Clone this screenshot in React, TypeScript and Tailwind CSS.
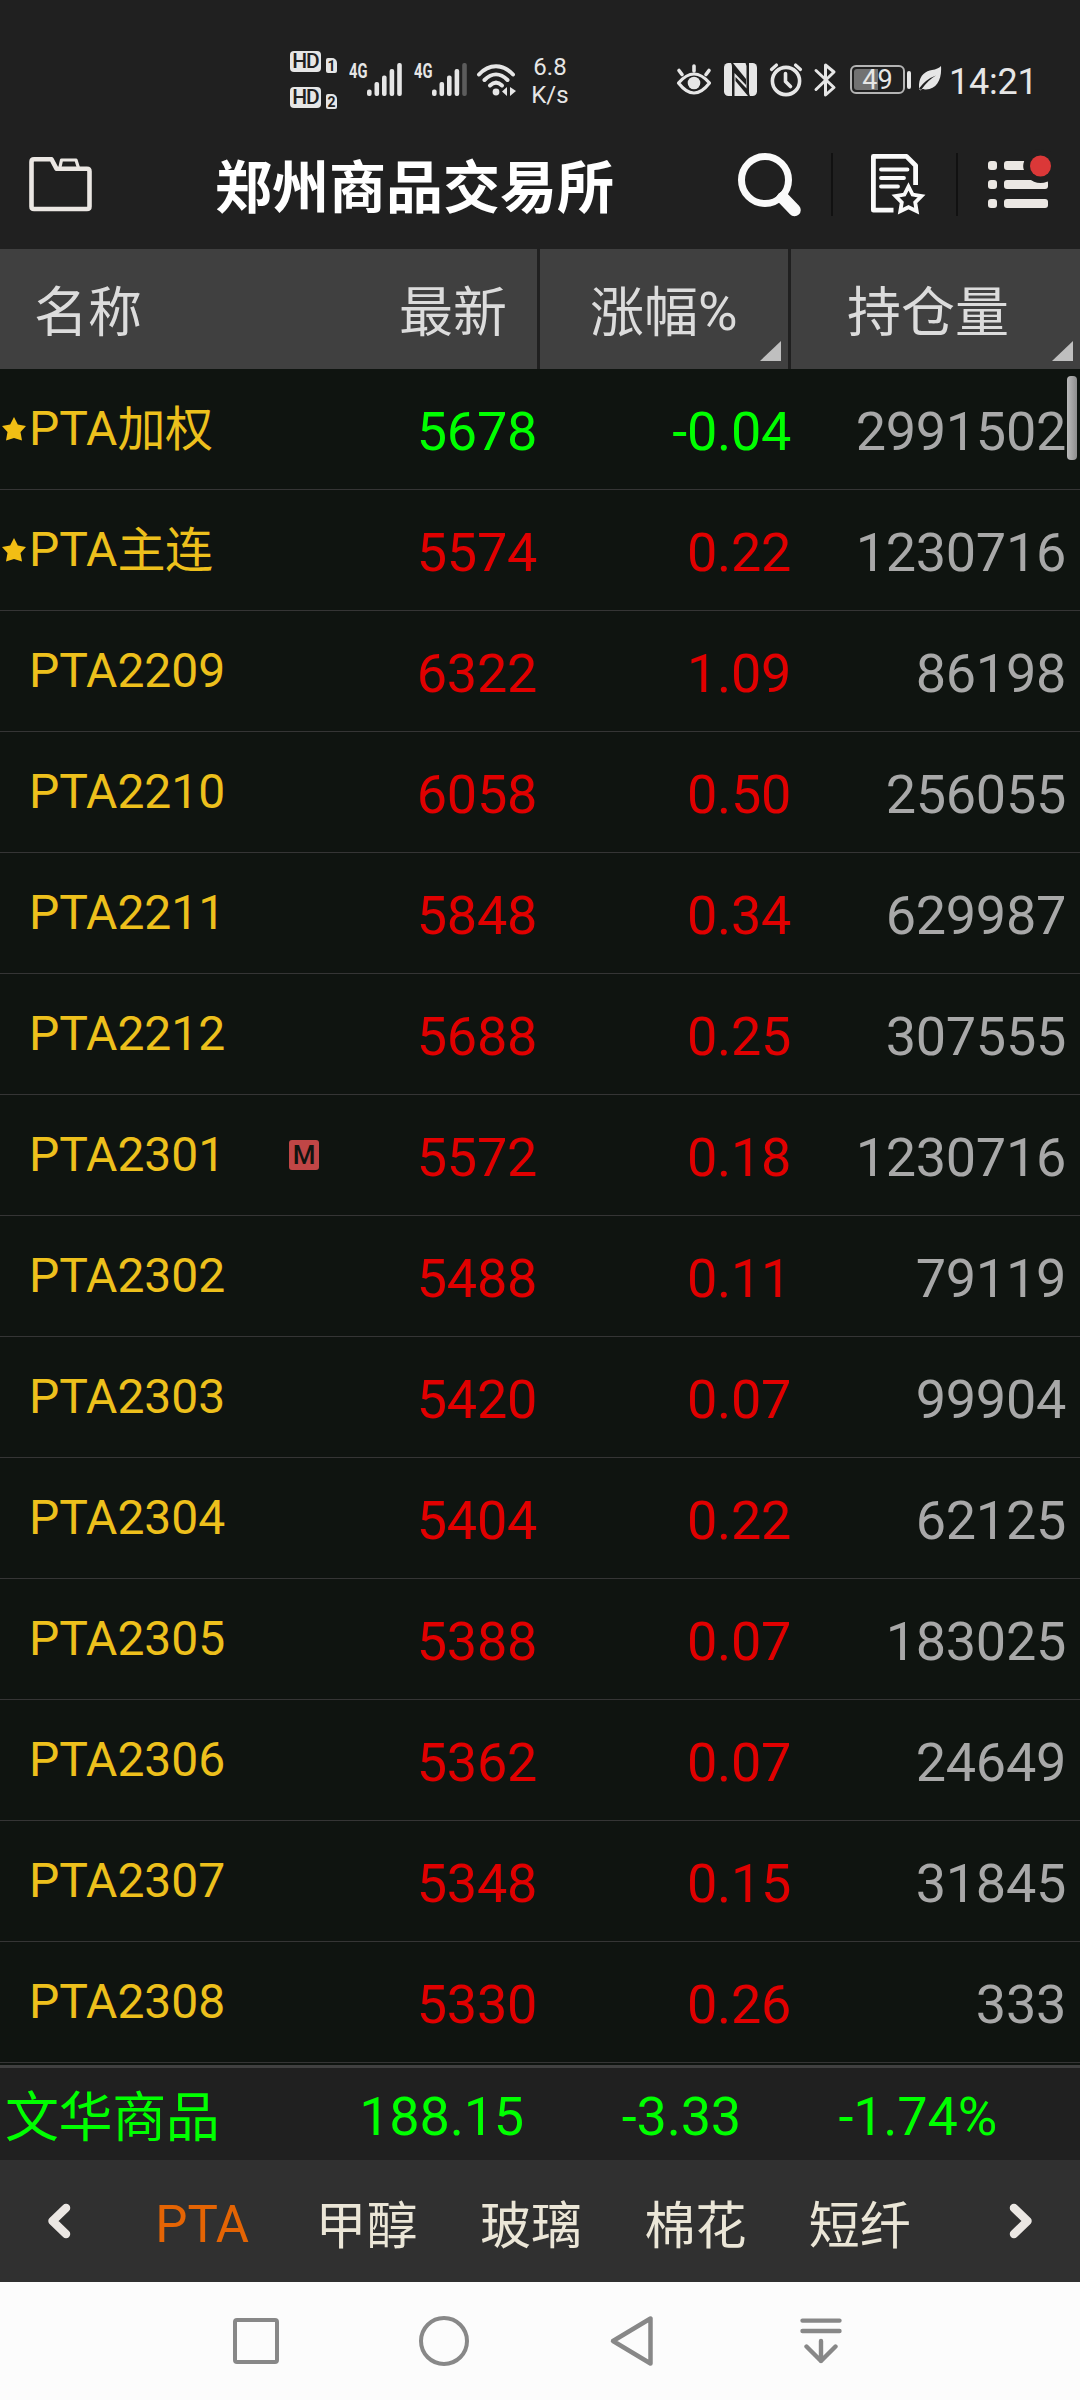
import React from "react";

type Quote = {
  name: string;
  label?: string;
  last: string;
  change: string;
  interest: string;
  starred?: boolean;
  main?: boolean;
};

const quotes: Quote[] = [
  { name: "PTA", label: "加权", last: "5678", change: "-0.04", interest: "2991502", starred: true },
  { name: "PTA", label: "主连", last: "5574", change: "0.22", interest: "1230716", starred: true },
  { name: "PTA2209", last: "6322", change: "1.09", interest: "86198" },
  { name: "PTA2210", last: "6058", change: "0.50", interest: "256055" },
  { name: "PTA2211", last: "5848", change: "0.34", interest: "629987" },
  { name: "PTA2212", last: "5688", change: "0.25", interest: "307555" },
  { name: "PTA2301", last: "5572", change: "0.18", interest: "1230716", main: true },
  { name: "PTA2302", last: "5488", change: "0.11", interest: "79119" },
  { name: "PTA2303", last: "5420", change: "0.07", interest: "99904" },
  { name: "PTA2304", last: "5404", change: "0.22", interest: "62125" },
  { name: "PTA2305", last: "5388", change: "0.07", interest: "183025" },
  { name: "PTA2306", last: "5362", change: "0.07", interest: "24649" },
  { name: "PTA2307", last: "5348", change: "0.15", interest: "31845" },
  { name: "PTA2308", last: "5330", change: "0.26", interest: "333" },
];

const tabs = ["PTA", "甲醇", "玻璃", "棉花", "短纤"];

function HdBadge({ sim }: { sim: string }) {
  return (
    <div className="flex h-[22px] items-start">
      <span className="flex h-[21px] w-[31px] items-center justify-center rounded-[4px] bg-[#e6e6e6] text-[21px] leading-none font-medium tracking-[-1px] text-[#202020]">
        HD
      </span>
      <span className="mt-[7px] ml-[5px] flex h-[15px] w-[11px] items-center justify-center rounded-[2px] rounded-tr-[5px] bg-[#e6e6e6] text-[14px] leading-none font-bold text-[#202020]">
        {sim}
      </span>
    </div>
  );
}

function Signal({ weak }: { weak?: boolean }) {
  return (
    <div className="flex h-[33px] w-[53px] justify-between">
      <span className="w-[18px] text-[21px] leading-[16px] font-bold">
        <span className="inline-block origin-left scale-x-[0.7]">4G</span>
      </span>
      <svg width="35" height="33" viewBox="0 0 35 33" fill="#e6e6e6">
        <rect x="0" y="26.5" width="4.6" height="6.5" rx="2" />
        <rect x="7.5" y="19" width="4.6" height="14" rx="2" />
        <rect x="15" y="12.500" width="4.6" height="20.500" rx="2" />
        <rect x="22.600" y="6" width="4.6" height="27" rx="2" />
        <rect x="30.200" y="0" width="4.6" height="33" rx="2" fill={weak ? "#5c5c5c" : "#e6e6e6"} />
      </svg>
    </div>
  );
}

function StatusBar() {
  return (
    <div className="flex h-[121px] items-start text-[#e6e6e6]">
      <div className="mt-[51px] ml-[290px] flex w-[47px] flex-col gap-[14px]">
        <HdBadge sim="1" />
        <HdBadge sim="2" />
      </div>
      <div className="mt-[63px] ml-[12px] flex gap-[12px]">
        <Signal />
        <Signal weak />
      </div>
      <svg className="mt-[63px] ml-[9px]" width="41" height="34" viewBox="0 0 41 34" fill="none" stroke="#e6e6e6" strokeWidth="4" strokeLinecap="round">
        <path d="M3 11.500C13 .5 27 .5 37 11.500" />
        <path d="M8.500 17C16 9.500 24 9.500 31.500 17" />
        <path d="M14 22.500C18 18.700 22 18.700 26 22.500" />
        <circle cx="20" cy="29" r="3.400" fill="#e6e6e6" stroke="none" />
        <path d="M31 24v9l-5-4.500zM34 24l6 4-6 5z" fill="#e6e6e6" stroke="none" />
      </svg>
      <div className="mt-[53px] ml-[9px] w-[48px] text-center text-[24px] leading-[28px]">
        <div>6.8</div>
        <div>K/s</div>
      </div>
      <svg className="mt-[62px] ml-[102px]" width="36" height="35" viewBox="0 0 36 35" fill="none" stroke="#e6e6e6" strokeWidth="3.600" strokeLinecap="round">
        <path d="M2.500 21Q18 3 33.500 21Q18 41 2.500 21Z" strokeLinejoin="round" strokeWidth="3.200" />
        <circle cx="18" cy="21" r="6.300" fill="#e6e6e6" stroke="none" />
        <path d="M18 4v5M3 8.500l3 4M33 8.500l-3 4" />
      </svg>
      <svg className="mt-[63px] ml-[12px]" width="33" height="33" viewBox="0 0 33 33">
        <rect width="33" height="33" rx="4.500" fill="#e6e6e6" />
        <path d="M8 33V4Q8 1.500 7 0L9 0L22 16V22L10.500 10V33Z" fill="#202020" />
        <path d="M25 0V29Q25 31.500 26 33H24L11.500 18V14L22.500 25.500V3L21.500 0Z" fill="#202020" />
      </svg>
      <svg className="mt-[62px] ml-[12px]" width="34" height="35" viewBox="0 0 34 35" fill="none" stroke="#e6e6e6" strokeWidth="3.600" strokeLinecap="round" strokeLinejoin="round">
        <circle cx="17" cy="19" r="13.600" />
        <path d="M16.500 11.500v8l5 5" />
        <path d="M2.500 7.500l5-4.500M31.500 7.500l-5-4.500" strokeWidth="3.200" />
      </svg>
      <svg className="mt-[62px] ml-[10px]" width="24" height="36" viewBox="0 0 24 36" fill="none" stroke="#e6e6e6" strokeWidth="3" strokeLinejoin="round" strokeLinecap="round">
        <path d="M3 8.500L21 25.500L12.500 33V3L21 10L3 27.500" />
      </svg>
      <div className="mt-[65px] ml-[13px] flex items-center">
        <div className="relative flex h-[29px] w-[55px] items-center justify-center rounded-[6px] border-2 border-[#b4b4b4] text-[27px] leading-none">
          <span className="absolute top-[2px] left-[2px] h-[21px] w-[24px] rounded-l-[3px] bg-[#727272]" />
          <span className="relative top-px">49</span>
        </div>
        <div className="ml-[2px] h-[18px] w-[4px] rounded-[2px] bg-[#e6e6e6]" />
      </div>
      <svg className="mt-[66px] ml-[8px]" width="23" height="25" viewBox="0 0 23 25">
        <path d="M22 0C23 13 18 23 7 23.500C4 23.500 4 22 1.500 24.500L0 23C-1 10 6 5 13 4C17 3.500 20 2 22 0Z" fill="#e6e6e6" />
        <path d="M0 22.500Q7 13 17 9.500Q9 14 2 24Z" fill="#202020" />
      </svg>
      <span className="mt-[61px] ml-[7px] text-[36px] leading-[42px] tracking-[-0.2px]">14:21</span>
    </div>
  );
}

function TitleBar() {
  return (
    <div className="flex h-[128px] items-start">
      <svg className="mt-[36px] ml-[29px]" width="63" height="55" viewBox="0 0 63 55" fill="none" stroke="#ebe7e3" strokeWidth="4.600" strokeLinejoin="round">
        <path d="M2.500 5Q2.500 2.300 5 2.300H22.500L27.500 11.800H58Q60.500 11.800 60.500 14.500V49.500Q60.500 52 58 52H5Q2.500 52 2.500 49.500Z" />
        <path d="M31 10L32.500 3H47L49.500 11" strokeWidth="3.200" />
      </svg>
      <h1 className="mt-[34px] ml-[123px] w-[400px] text-[57px] leading-[68px] font-bold whitespace-nowrap text-white">郑州商品交易所</h1>
      <svg className="mt-[32px] ml-[122px]" width="65" height="65" viewBox="0 0 65 65" fill="none" stroke="#fafafa">
        <circle cx="28" cy="27" r="23.500" strokeWidth="7" />
        <path d="M46 45L57.500 57" strokeWidth="12.500" strokeLinecap="round" />
        <path d="M42 41L50 49" strokeWidth="10" />
      </svg>
      <div className="mt-[32px] ml-[29px] h-[63px] w-[2px] bg-[#111111]" />
      <svg className="mt-[33px] ml-[38px]" width="55" height="62" viewBox="0 0 55 62" fill="none" stroke="#fafafa" strokeWidth="4.800">
        <path d="M22.500 56.200H2.400V2.400H35.500L44.600 11.500V31" strokeLinejoin="round" />
        <path d="M10 15.500H36.500M10 24H33M10 32.500H27" strokeWidth="3.800" strokeLinecap="round" />
        <path d="M37.500 32.500L41.600 40.600L50.500 42L44.200 48.300L45.700 57.200L37.500 53.200L29.300 57.200L30.800 48.300L24.500 42L33.400 40.600Z" strokeWidth="3.800" />
      </svg>
      <div className="mt-[32px] ml-[30px] h-[63px] w-[2px] bg-[#111111]" />
      <svg className="mt-[34px] ml-[30px] overflow-visible" width="65" height="56" viewBox="0 0 65 56" fill="#ebe7e3">
        <rect x="0" y="-3" width="9" height="9" rx="3" transform="translate(0 0)" className="hidden" />
        <rect x="0" y="-2.500" width="9" height="9" rx="3" transform="translate(0 8.500)" />
        <rect x="0" y="25" width="9" height="9" rx="3" transform="translate(0 0)" />
        <rect x="0" y="44" width="9" height="9" rx="3" />
        <path d="M19 6H36.500Q34.500 10 36 15H19Q16 15 16 12V9Q16 6 19 6Z" />
        <rect x="16" y="25" width="44" height="9" rx="3" />
        <rect x="16" y="44" width="44" height="9" rx="3" />
        <circle cx="52.500" cy="11" r="17" fill="#202020" />
        <circle cx="52.500" cy="11" r="10.500" fill="#db3838" />
      </svg>
    </div>
  );
}

function SortMark() {
  return (
    <svg className="absolute right-[7px] bottom-[8px]" width="21" height="20" viewBox="0 0 21 20">
      <path d="M21 0V20H0Z" fill="#bfbfbf" />
    </svg>
  );
}

function ColumnHeader() {
  return (
    <div className="flex h-[120px] gap-[3px] text-[54px] leading-[64px] text-[#dcdcdc]">
      <div className="flex w-[537px] items-center justify-between bg-[#404040] pt-[10px] pr-[30px] pl-[34px]">
        <span>名称</span>
        <span>最新</span>
      </div>
      <div className="relative flex w-[248px] items-center bg-[#404040] pt-[10px] pl-[50px]">
        <span>
          涨幅<span className="relative -top-[2px]">%</span>
        </span>
        <SortMark />
      </div>
      <div className="relative flex flex-1 items-center bg-[#404040] pt-[10px] pl-[56px]">
        持仓量
        <SortMark />
      </div>
    </div>
  );
}

function QuoteRow({ q }: { q: Quote }) {
  const tone = q.change.startsWith("-") ? "text-[#00ff00]" : "text-[#e00000]";
  return (
    <div className="flex h-[121px] items-center border-b border-[#353535] text-[54px] leading-[64px] tracking-[-0.3px]">
      <div className="flex w-[289px] items-center text-[48px] leading-[58px] tracking-normal text-[#edc01c]">
        <div className="flex w-[29px] pl-[2px]">
          {q.starred && (
            <svg width="24" height="24" viewBox="0 0 24 24">
              <path d="M12 0L15.800 7.500L24 9L18.500 15L20 23.500L12 21L4 23.500L5.500 15L0 9L8.200 7.500Z" fill="#f2be14" />
            </svg>
          )}
        </div>
        <span>
          {q.name}
          {q.label && <span className="relative top-px tracking-[-0.5px]">{q.label}</span>}
        </span>
      </div>
      <div className="w-[30px]">
        {q.main && (
          <div className="flex h-[30px] items-center justify-center rounded-[3px] bg-[#c04646] text-[26px] leading-none font-medium text-[#101410]">M</div>
        )}
      </div>
      <div className={"w-[218px] pt-[5px] text-right " + tone}>{q.last}</div>
      <div className={"w-[254px] pt-[5px] text-right " + tone}>{q.change}</div>
      <div className="flex-1 pt-[5px] pr-[14px] text-right text-[#a8a8a8]">{q.interest}</div>
    </div>
  );
}

function NavBar() {
  return (
    <div className="flex h-[118px] items-start bg-[#fcfcfc] pt-[33px] text-[#888888]">
      <div className="mt-[3px] ml-[233px] h-[46px] w-[46px] rounded-[4px] border-[4.5px] border-[#888888]" />
      <div className="mt-px ml-[140px] h-[50px] w-[50px] rounded-full border-[4.5px] border-[#888888]" />
      <svg className="ml-[140px]" width="46" height="52" viewBox="0 0 46 52" fill="none" stroke="currentColor" strokeWidth="4.500" strokeLinejoin="round">
        <path d="M41.500 3.500V48.500L4 26Z" />
      </svg>
      <svg className="mt-[3px] ml-[145px]" width="42" height="46" viewBox="0 0 42 46" fill="none" stroke="currentColor" strokeWidth="4.400" strokeLinecap="round" strokeLinejoin="round">
        <path d="M2.500 2.600H39.500M2.500 13H39.500M21 23V43M6.500 28.500L21 43L35.500 28.500" />
      </svg>
    </div>
  );
}

export default function App() {
  return (
    <div className="flex h-[2400px] w-[1080px] flex-col overflow-hidden bg-[#202020] font-['Roboto','Noto_Sans_CJK_SC',sans-serif]">
      <StatusBar />
      <TitleBar />
      <ColumnHeader />
      <div className="relative h-[1696px] bg-[#0f1410]">
        {quotes.map((q) => (
          <QuoteRow key={q.name + (q.label ?? "")} q={q} />
        ))}
        <div className="absolute top-[7px] right-[3px] h-[84px] w-[10px] rounded-[4px] bg-linear-to-r from-[#bababa] to-[#8e8e8e]" />
      </div>
      <div className="flex h-[95px] items-center border-t-[3px] border-[#404040] pt-[5px] text-[54px] leading-[64px] tracking-[-0.2px] whitespace-nowrap text-[#00ff00]">
        <span className="relative top-[2px] w-[260px] pl-[5px] tracking-[-0.4px]">文华商品</span>
        <span className="w-[264px] text-right">188.15</span>
        <span className="w-[217px] text-right">-3.33</span>
        <span className="w-[256px] text-right">-1.74%</span>
      </div>
      <div className="flex h-[122px] items-center bg-[#303030]">
        <svg className="ml-[47px]" width="24" height="36" viewBox="0 0 24 36" fill="none" stroke="#ebe7e3" strokeWidth="8.500" strokeLinejoin="round" strokeLinecap="round">
          <path d="M19 5L5.500 18L19 31" />
        </svg>
        <div className="ml-[49px] flex w-[822px] pt-[9px] text-[51px] leading-[60px] text-[#ebe6d7]">
          {tabs.map((t, i) => (
            <span key={t} className={i === 0 ? "flex-1 text-center text-[#e46404]" : "flex-1 pt-[2px] text-center"}>
              {t}
            </span>
          ))}
        </div>
        <svg className="ml-[67px]" width="24" height="36" viewBox="0 0 24 36" fill="none" stroke="#ebe7e3" strokeWidth="8.500" strokeLinejoin="round" strokeLinecap="round">
          <path d="M5 5L18.500 18L5 31" />
        </svg>
      </div>
      <NavBar />
    </div>
  );
}
